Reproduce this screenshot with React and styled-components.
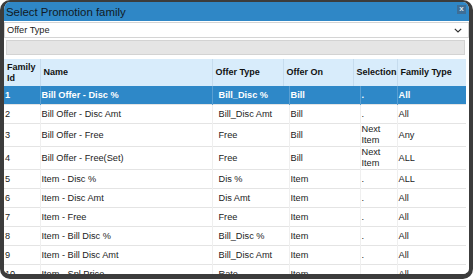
import React from "react";
import styled, { createGlobalStyle } from "styled-components";

const rows = [
  ["1", "Bill Offer - Disc %", "Bill_Disc %", "Bill", ".", "All"],
  ["2", "Bill Offer - Disc Amt", "Bill_Disc Amt", "Bill", ".", "All"],
  ["3", "Bill Offer - Free", "Free", "Bill", "Next Item", "Any"],
  ["4", "Bill Offer - Free(Set)", "Free", "Bill", "Next Item", "ALL"],
  ["5", "Item - Disc %", "Dis %", "Item", ".", "ALL"],
  ["6", "Item - Disc Amt", "Dis Amt", "Item", ".", "All"],
  ["7", "Item - Free", "Free", "Item", ".", "All"],
  ["8", "Item - Bill Disc %", "Bill_Disc %", "Item", ".", "All"],
  ["9", "Item - Bill Disc Amt", "Bill_Disc Amt", "Item", ".", "All"],
  ["10", "Item - Spl Price", "Rate", "Item", ".", "All"],
];

const headCols = [36, 172, 71, 70, 44, 69];
const bodyCols = [36, 172, 77, 71, 37, 69];
const heads = ["Family Id", "Name", "Offer Type", "Offer On", "Selection", "Family Type"];

const App = () => {
  return (
    <>
      <GlobalStyle />
      <Dialog>
        <TitleBar>
          <Title>Select Promotion family</Title>
          <CloseBtn>x</CloseBtn>
        </TitleBar>
        <SelectBox>
          <span>Offer Type</span>
          <Chevron viewBox="0 0 8 5">
            <path d="M0.8 0.8 L4 4 L7.2 0.8" fill="none" stroke="#333" strokeWidth="1.2" />
          </Chevron>
        </SelectBox>
        <SearchBar />
        <Table>
          <colgroup>
            {headCols.map((w, i) => (
              <col key={i} style={{ width: w }} />
            ))}
          </colgroup>
          <thead>
            <tr>
              {heads.map((h, i) => (
                <Th key={i} first={i === 0}>
                  {h}
                </Th>
              ))}
            </tr>
          </thead>
        </Table>
        <Table>
          <colgroup>
            {bodyCols.map((w, i) => (
              <col key={i} style={{ width: w }} />
            ))}
          </colgroup>
          <tbody>
            {rows.map((r, l) => (
              <Tr key={l} selected={l === 0}>
                {r.map((c, i) => (
                  <Td key={i} first={i === 0} pad={i === 2 ? 6 : 1} selected={l === 0}>
                    {c}
                  </Td>
                ))}
              </Tr>
            ))}
          </tbody>
        </Table>
      </Dialog>
    </>
  );
};

export default App;

const GlobalStyle = createGlobalStyle`
  body {
    margin: 0;
    background: #ffffff;
    font-family: "Liberation Sans", Arial, sans-serif;
  }
`;

const Dialog = styled.div`
  width: 473px;
  height: 279px;
  box-sizing: border-box;
  border: 4px solid #3c3c3c;
  border-top-width: 2px;
  border-bottom-width: 5px;
  border-radius: 10px;
  background: #ffffff;
  overflow: hidden;
  display: flex;
  flex-direction: column;
`;

const TitleBar = styled.div`
  height: 19px;
  flex: none;
  background: #2f87c6;
  display: flex;
  align-items: center;
  justify-content: space-between;
  padding: 0 3px 0 2px;
`;

const Title = styled.span`
  font-size: 11.4px;
  color: #111a24;
`;

const CloseBtn = styled.span`
  width: 9px;
  height: 9px;
  margin-top: -4px;
  background: #3e6e96;
  color: #dce6ef;
  font-size: 8px;
  font-weight: bold;
  line-height: 8px;
  text-align: center;
`;

const SelectBox = styled.div`
  height: 14px;
  flex: none;
  margin-top: 1px;
  border: 1px solid #d4d4d4;
  background: #ffffff;
  display: flex;
  align-items: center;
  justify-content: space-between;
  padding: 0 6px 0 2px;
  font-size: 9.2px;
  color: #222;
`;

const Chevron = styled.svg`
  width: 8px;
  height: 5px;
`;

const SearchBar = styled.div`
  flex: none;
  height: 13px;
  width: 457px;
  margin: 2px 0 0 2px;
  background: #e5e5e5;
  border: 1px solid #d3d3d3;
`;

const Table = styled.table`
  width: 462px;
  flex: none;
  border-collapse: collapse;
  table-layout: fixed;
  &:first-of-type {
    margin-top: 4px;
  }
`;

const Th = styled.th`
  height: 27px;
  padding: 0 0 0 3px;
  background: #d8ecfb;
  border-left: ${({ first }) => (first ? "none" : "1px solid #c6dcee")};
  font-size: 9px;
  font-weight: bold;
  color: #111;
  text-align: left;
  line-height: 11px;
  vertical-align: middle;
`;

const Tr = styled.tr`
  background: ${({ selected }) => (selected ? "#2e88c8" : "#ffffff")};
  border-bottom: 1px solid #e4e4e4;
`;

const Td = styled.td`
  height: 18px;
  padding: 0 2px 0 ${({ pad }) => pad}px;
  border-left: ${({ first, selected }) =>
    first ? "none" : selected ? "1px solid #5a9fd2" : "1px solid #efefef"};
  font-size: 9.2px;
  line-height: 11px;
  font-weight: ${({ selected }) => (selected ? "bold" : "normal")};
  color: ${({ selected }) => (selected ? "#ffffff" : "#1c1c1c")};
  vertical-align: middle;
  white-space: normal;
`;
